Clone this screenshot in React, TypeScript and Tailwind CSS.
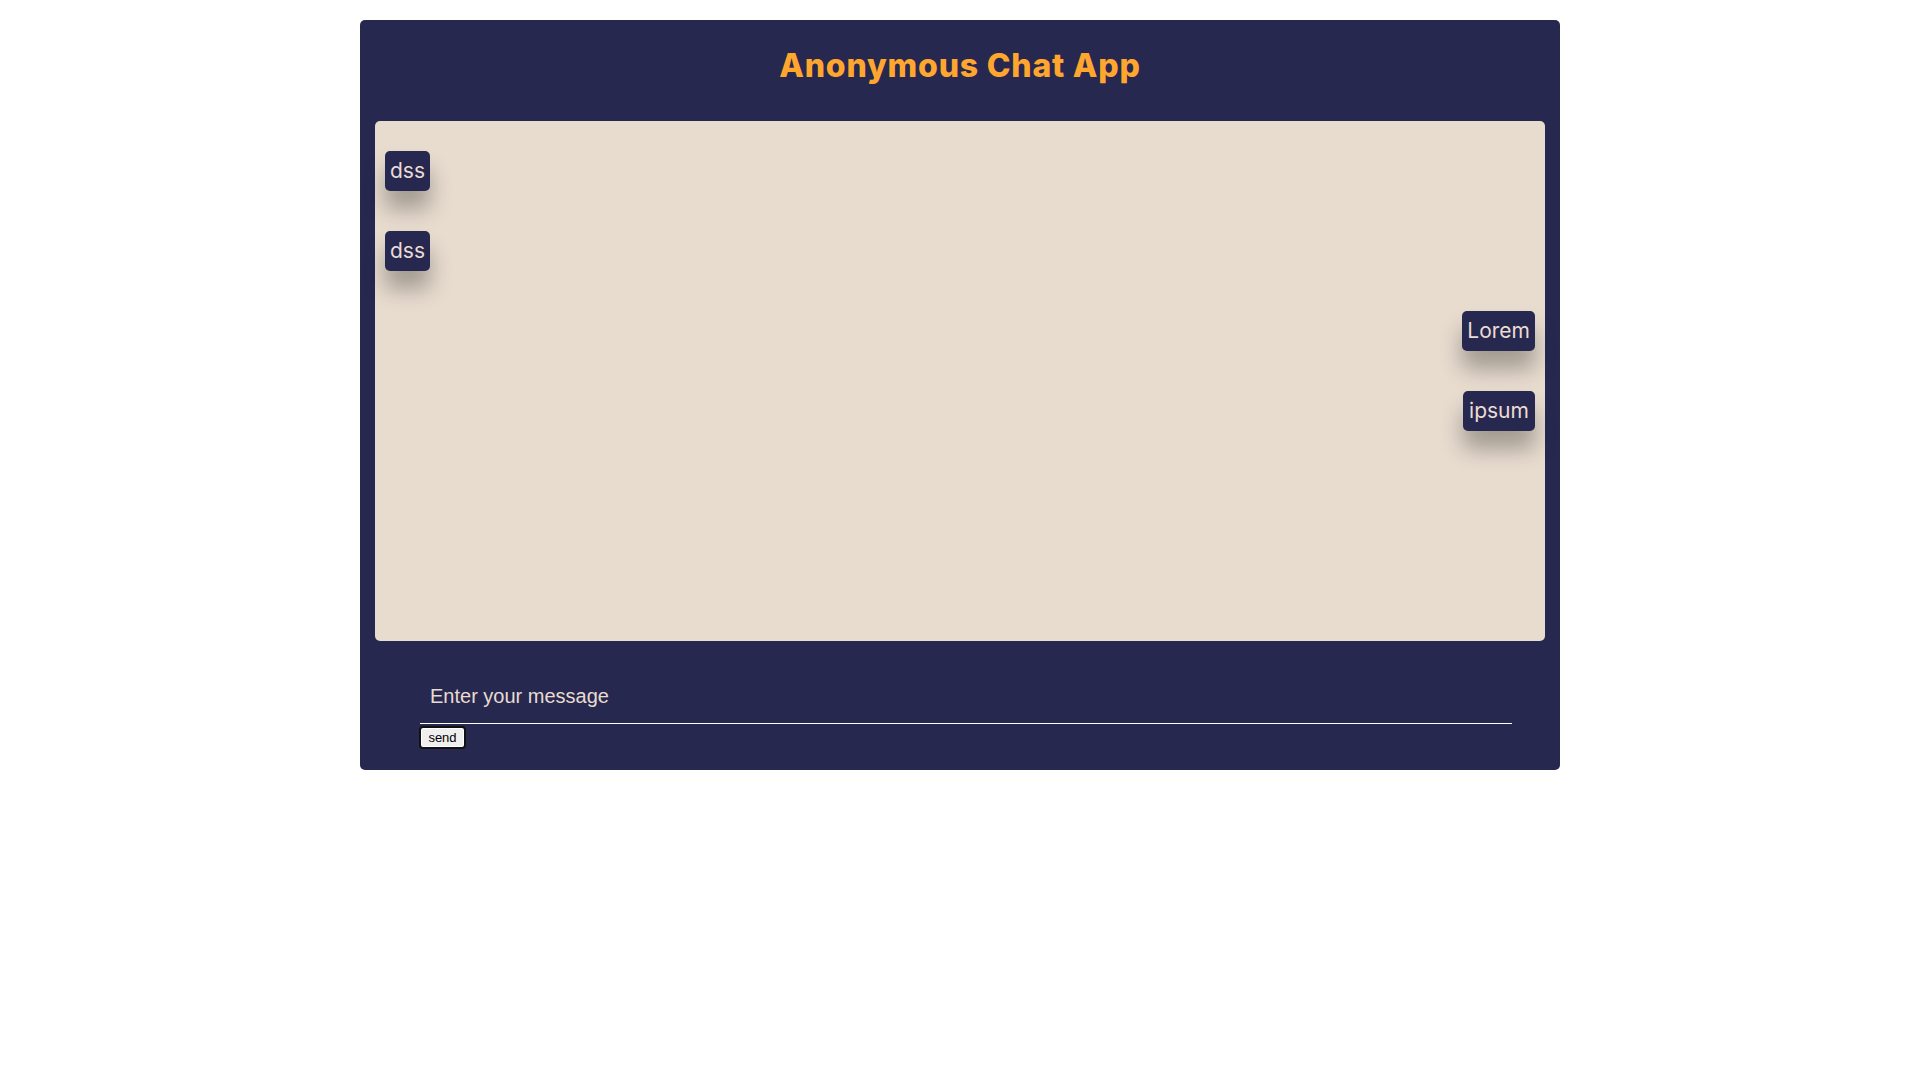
import { useState } from "react"

const messages = [
  { text: "dss", mine: false },
  { text: "dss", mine: false },
  { text: "Lorem", mine: true },
  { text: "ipsum", mine: true },
]

export default function App() {
  const [draft, setDraft] = useState("")

  return (
    <div className="min-h-screen bg-white pt-[20px]">
      <div className="mx-auto flex h-[750px] w-[1200px] flex-col rounded-[5px] bg-[#272850]">
        {/* Header */}
        <div className="h-[101px] pt-[22px] text-center">
          <h1 className="text-[32px] leading-[48px] font-extrabold tracking-[0.8px] text-[#ffa62f] [font-family:Inter,'Noto_Sans',sans-serif]">
            Anonymous Chat App
          </h1>
        </div>

        {/* Messages */}
        <div className="mx-[15px] flex h-[520px] flex-col gap-[40px] rounded-[5px] bg-[#e8dccf] px-[10px] pt-[30px]">
          {messages.map((m, i) => (
            <div
              key={i}
              className={`h-[40px] min-w-[44px] rounded-[5px] bg-[#272850] px-[5px] text-center text-[21px] leading-[40px] text-[#eddcd2] shadow-[0_18px_22px_rgba(0,0,0,0.3)] [font-family:Inter,'Noto_Sans',sans-serif] ${m.mine ? "self-end min-w-[72px]" : "self-start"}`}
            >
              {m.text}
            </div>
          ))}
        </div>

        {/* Composer */}
        <input
          value={draft}
          onChange={(e) => setDraft(e.target.value)}
          placeholder="Enter your message"
          className="mt-[34px] ml-[60px] box-border h-[49px] w-[1092px] border-b border-white bg-transparent pt-[10px] pb-[15px] pl-[10px] text-[20px] leading-[23px] text-[#e8dccf] outline-none placeholder:text-[#e8dccf] [font-family:'Liberation_Sans',Arial,sans-serif]"
        />
        <div className="ml-[59px] mt-[2px] flex">
          <button className="h-[23px] w-[47px] rounded-[4px] border-2 border-[#111] bg-[#efefef] text-[13px] leading-none text-black shadow-[inset_0_0_0_1px_#fff] [font-family:'Liberation_Sans',Arial,sans-serif]">
            send
          </button>
        </div>
      </div>
    </div>
  )
}
